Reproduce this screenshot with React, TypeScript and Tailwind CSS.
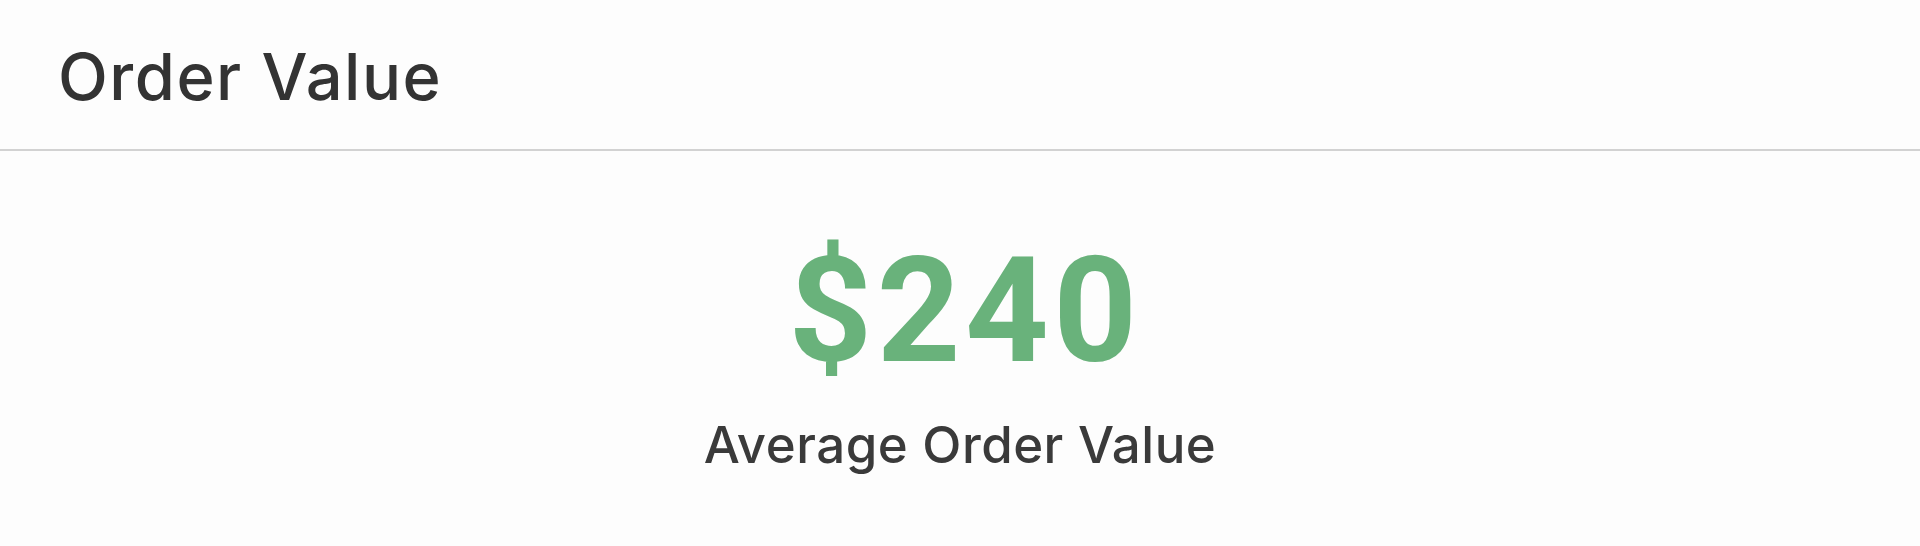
import React from "react";

function KpiCard() {
  return (
    <div className="flex min-h-[546px] w-full flex-col bg-[#fdfdfd] font-['Inter',sans-serif]">
      <div className="px-[58px] pt-[44px] pb-[40px]">
        <h2 className="text-[65px] leading-[65px] font-medium tracking-[1.5px] text-[#333333]">Order Value</h2>
      </div>
      <div className="h-[2px] w-full bg-[#d2d2d2]" />
      <div className="flex flex-col items-center pt-[88px]">
        <div className="ml-[10px] font-['Roboto',sans-serif] text-[146px] leading-[146px] font-bold tracking-[4.5px] text-[#69b27b]">
          $240
        </div>
        <div className="mt-[34px] text-[51px] leading-[51px] font-medium tracking-[0.5px] text-[#3a3a3a]">
          Average Order Value
        </div>
      </div>
    </div>
  );
}

export default function App() {
  return <KpiCard />;
}
